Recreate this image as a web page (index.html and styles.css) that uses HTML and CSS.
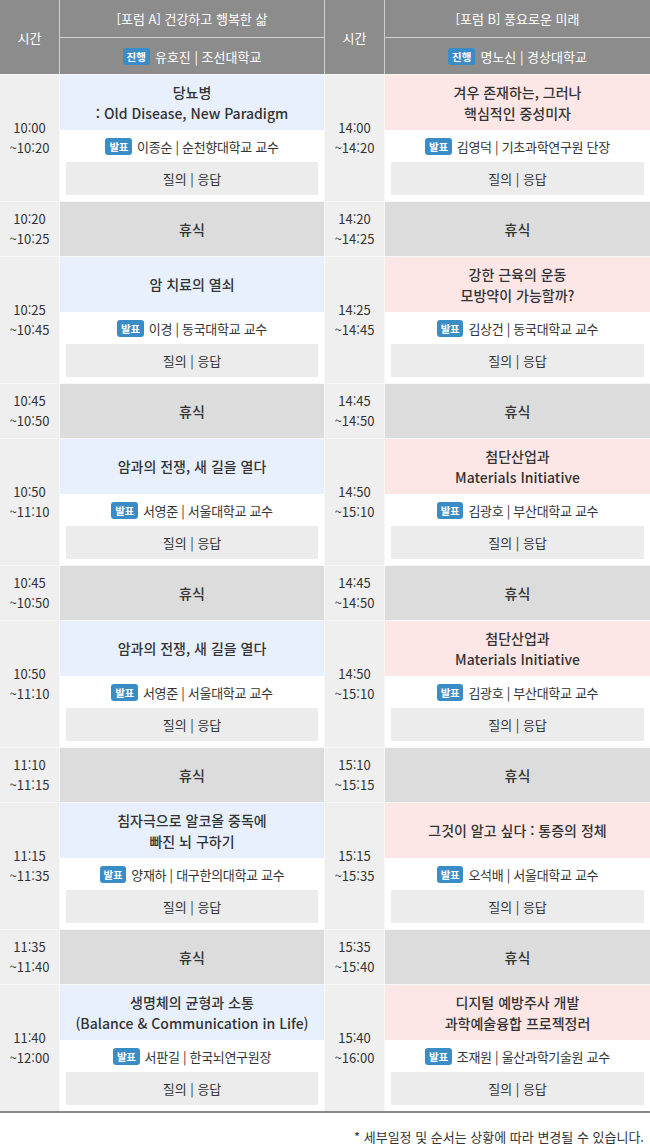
FILE: index.html
```html
<!DOCTYPE html>
<html lang="ko">
<head>
<meta charset="utf-8">
<title>포럼 일정</title>
<link rel="stylesheet" href="styles.css">
</head>
<body>
<div class="schedule">
  <div class="head">
    <div class="h-time">시간</div>
    <div class="h-forum">
      <div class="h-title">[포럼 A] 건강하고 행복한 삶</div>
      <div class="h-chair"><span class="badge">진행</span>유호진 | 조선대학교</div>
    </div>
    <div class="h-time">시간</div>
    <div class="h-forum">
      <div class="h-title">[포럼 B] 풍요로운 미래</div>
      <div class="h-chair"><span class="badge">진행</span>명노신 | 경상대학교</div>
    </div>
  </div>

  <div class="row session">
    <div class="time">10:00<br>~10:20</div>
    <div class="cell">
      <div class="title a">당뇨병<br>: Old Disease, New Paradigm</div>
      <div class="speaker"><span class="badge">발표</span>이종순 | 순천향대학교 교수</div>
      <div class="qa">질의 | 응답</div>
    </div>
    <div class="time">14:00<br>~14:20</div>
    <div class="cell">
      <div class="title b">겨우 존재하는, 그러나<br>핵심적인 중성미자</div>
      <div class="speaker"><span class="badge">발표</span>김영덕 | 기초과학연구원 단장</div>
      <div class="qa">질의 | 응답</div>
    </div>
  </div>

  <div class="row brk">
    <div class="time">10:20<br>~10:25</div>
    <div class="rest">휴식</div>
    <div class="time">14:20<br>~14:25</div>
    <div class="rest">휴식</div>
  </div>

  <div class="row session">
    <div class="time">10:25<br>~10:45</div>
    <div class="cell">
      <div class="title a">암 치료의 열쇠</div>
      <div class="speaker"><span class="badge">발표</span>이경 | 동국대학교 교수</div>
      <div class="qa">질의 | 응답</div>
    </div>
    <div class="time">14:25<br>~14:45</div>
    <div class="cell">
      <div class="title b">강한 근육의 운동<br>모방약이 가능할까?</div>
      <div class="speaker"><span class="badge">발표</span>김상건 | 동국대학교 교수</div>
      <div class="qa">질의 | 응답</div>
    </div>
  </div>

  <div class="row brk">
    <div class="time">10:45<br>~10:50</div>
    <div class="rest">휴식</div>
    <div class="time">14:45<br>~14:50</div>
    <div class="rest">휴식</div>
  </div>

  <div class="row session">
    <div class="time">10:50<br>~11:10</div>
    <div class="cell">
      <div class="title a">암과의 전쟁, 새 길을 열다</div>
      <div class="speaker"><span class="badge">발표</span>서영준 | 서울대학교 교수</div>
      <div class="qa">질의 | 응답</div>
    </div>
    <div class="time">14:50<br>~15:10</div>
    <div class="cell">
      <div class="title b">첨단산업과<br>Materials Initiative</div>
      <div class="speaker"><span class="badge">발표</span>김광호 | 부산대학교 교수</div>
      <div class="qa">질의 | 응답</div>
    </div>
  </div>

  <div class="row brk">
    <div class="time">10:45<br>~10:50</div>
    <div class="rest">휴식</div>
    <div class="time">14:45<br>~14:50</div>
    <div class="rest">휴식</div>
  </div>

  <div class="row session">
    <div class="time">10:50<br>~11:10</div>
    <div class="cell">
      <div class="title a">암과의 전쟁, 새 길을 열다</div>
      <div class="speaker"><span class="badge">발표</span>서영준 | 서울대학교 교수</div>
      <div class="qa">질의 | 응답</div>
    </div>
    <div class="time">14:50<br>~15:10</div>
    <div class="cell">
      <div class="title b">첨단산업과<br>Materials Initiative</div>
      <div class="speaker"><span class="badge">발표</span>김광호 | 부산대학교 교수</div>
      <div class="qa">질의 | 응답</div>
    </div>
  </div>

  <div class="row brk">
    <div class="time">11:10<br>~11:15</div>
    <div class="rest">휴식</div>
    <div class="time">15:10<br>~15:15</div>
    <div class="rest">휴식</div>
  </div>

  <div class="row session">
    <div class="time">11:15<br>~11:35</div>
    <div class="cell">
      <div class="title a">침자극으로 알코올 중독에<br>빠진 뇌 구하기</div>
      <div class="speaker"><span class="badge">발표</span>양재하 | 대구한의대학교 교수</div>
      <div class="qa">질의 | 응답</div>
    </div>
    <div class="time">15:15<br>~15:35</div>
    <div class="cell">
      <div class="title b">그것이 알고 싶다 : 통증의 정체</div>
      <div class="speaker"><span class="badge">발표</span>오석배 | 서울대학교 교수</div>
      <div class="qa">질의 | 응답</div>
    </div>
  </div>

  <div class="row brk">
    <div class="time">11:35<br>~11:40</div>
    <div class="rest">휴식</div>
    <div class="time">15:35<br>~15:40</div>
    <div class="rest">휴식</div>
  </div>

  <div class="row session">
    <div class="time">11:40<br>~12:00</div>
    <div class="cell">
      <div class="title a">생명체의 균형과 소통<br>(Balance &amp; Communication in Life)</div>
      <div class="speaker"><span class="badge">발표</span>서판길 | 한국뇌연구원장</div>
      <div class="qa">질의 | 응답</div>
    </div>
    <div class="time">15:40<br>~16:00</div>
    <div class="cell">
      <div class="title b">디지털 예방주사 개발<br>과학예술융합 프로젝정러</div>
      <div class="speaker"><span class="badge">발표</span>조재원 | 울산과학기술원 교수</div>
      <div class="qa">질의 | 응답</div>
    </div>
  </div>
</div>
<p class="note">* 세부일정 및 순서는 상황에 따라 변경될 수 있습니다.</p>
</body>
</html>
```

FILE: styles.css
```css
* { box-sizing: border-box; }
html, body { margin: 0; padding: 0; background: #fff; }
body {
  font-family: "Noto Sans CJK KR", "Noto Sans", sans-serif;
  color: #333;
  width: 650px;
}
.schedule {
  display: flex;
  flex-direction: column;
  gap: 1px;
  background: #f7f7f7;
  border-bottom: 2px solid #888;
}
.head, .row {
  display: grid;
  grid-template-columns: 59px 264px 59px 265px;
  column-gap: 1px;
}
.head {
  background: #cfcfcf;
  height: 74px;
}
.h-time {
  background: #8c8c8c;
  color: #fff;
  font-size: 13px;
  display: flex;
  align-items: center;
  justify-content: center;
}
.h-forum {
  display: flex;
  flex-direction: column;
  gap: 1px;
}
.h-title, .h-chair {
  background: #8c8c8c;
  color: #fff;
  font-size: 13px;
  display: flex;
  align-items: center;
  justify-content: center;
}
.h-title { height: 37px; }
.h-chair { flex: 1; }
.badge {
  display: inline-block;
  background: #3a8cc6;
  color: #fff;
  font-size: 10.5px;
  font-weight: 700;
  line-height: 17px;
  padding: 0 4px;
  border-radius: 3px;
  margin-right: 5px;
}
.time {
  background: #efefef;
  font-size: 13px;
  line-height: 20px;
  display: flex;
  align-items: center;
  justify-content: center;
  text-align: center;
}
.session { height: 126px; }
.brk { height: 54px; }
.cell {
  background: #fff;
  display: flex;
  flex-direction: column;
  padding-bottom: 6px;
}
.title {
  height: 55px;
  display: flex;
  align-items: center;
  justify-content: center;
  text-align: center;
  font-size: 14px;
  font-weight: 500;
  line-height: 21px;
  color: #333;
}
.title.a { background: #e8f0fd; }
.title.b { background: #fde6e6; }
.speaker {
  height: 32px;
  display: flex;
  align-items: center;
  justify-content: center;
  font-size: 13px;
  letter-spacing: -0.3px;
}
.qa {
  flex: 1;
  margin: 0 6px;
  background: #ececec;
  display: flex;
  align-items: center;
  justify-content: center;
  font-size: 13px;
}
.rest {
  background: #dcdcdc;
  display: flex;
  align-items: center;
  justify-content: center;
  font-size: 14px;
  font-weight: 500;
}
.note {
  margin: 0;
  padding: 14px 6px 0 0;
  text-align: right;
  font-size: 13px;
  color: #333;
}
```
